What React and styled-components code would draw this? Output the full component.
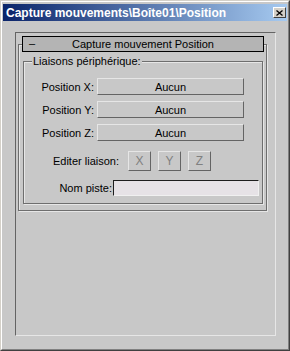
import React from 'react'
import styled, { createGlobalStyle } from 'styled-components'

const Global = createGlobalStyle`
    html, body {
        margin: 0;
        padding: 0;
        background: #c8c8c8;
    }
    body {
        font-family: 'Liberation Sans', Arial, sans-serif;
        font-size: 11px;
        color: #000;
    }
`

const Window = styled.div`
    width: 290px;
    height: 351px;
    box-sizing: border-box;
    border: 1px solid;
    border-color: #d4d0c8 #404040 #404040 #d4d0c8;
    background: #c8c8c8;
`
const Frame = styled.div`
    height: 100%;
    box-sizing: border-box;
    border: 1px solid;
    border-color: #ffffff #808080 #808080 #ffffff;
    padding: 2px 1px 1px 1px;
    display: flex;
    flex-direction: column;
`
const TitleBar = styled.div`
    height: 17px;
    flex: none;
    background: linear-gradient(to right, #0a246a, #a6caf0);
    display: flex;
    align-items: center;
    justify-content: space-between;
    padding: 0 1px 0 3px;
`
const Title = styled.span`
    color: #fff;
    font-weight: bold;
    font-size: 12px;
    white-space: nowrap;
`
const CloseBtn = styled.div`
    width: 13px;
    height: 11px;
    box-sizing: border-box;
    background: #d4d0c8;
    border: 1px solid;
    border-color: #ffffff #404040 #404040 #ffffff;
    display: flex;
    align-items: center;
    justify-content: center;
`
const Panel = styled.div`
    flex: 1;
    margin: 11px 11px 12px 12px;
    border: 1px solid;
    border-color: #646464 #e6e6e6 #e6e6e6 #646464;
    padding: 3px 0 0 2px;
`
const Rollout = styled.div`
    width: 249px;
`
const RollHeader = styled.div`
    position: relative;
    z-index: 1;
    height: 16px;
    box-sizing: border-box;
    margin: 0 3px 0 4px;
    border: 1px solid #000;
    background: #b4b4b4;
    display: flex;
    align-items: center;
    justify-content: center;
    .dash {
        position: absolute;
        left: 6px;
        top: 0px;
    }
`
const RollFrame = styled.div`
    margin-top: -8px;
    border: 1px solid #6e6e6e;
    box-shadow: inset 1px 1px 0 #e6e6e6, 1px 1px 0 #e6e6e6;
    padding: 16px 3px 6px 4px;
`
const Group = styled.div`
    position: relative;
    border: 1px solid #6e6e6e;
    box-shadow: inset 1px 1px 0 #e6e6e6, 1px 1px 0 #e6e6e6;
    padding: 16px 0 7px 0;
    display: flex;
    flex-direction: column;
`
const Caption = styled.span`
    position: absolute;
    top: -7px;
    left: 8px;
    padding: 0 1px;
    background: #c8c8c8;
    line-height: 13px;
`
const Row = styled.div`
    display: flex;
    align-items: center;
    gap: ${p => p.$gap}px;
    margin-top: ${p => p.$top}px;
`
const Label = styled.span`
    width: ${p => p.$w}px;
    text-align: right;
    white-space: nowrap;
`
const Button = styled.div`
    width: 147px;
    height: 17px;
    box-sizing: border-box;
    border: 1px solid;
    border-color: #e6e6e6 #646464 #646464 #e6e6e6;
    display: flex;
    align-items: center;
    justify-content: center;
`
const AxisGroup = styled.div`
    display: flex;
    gap: 7px;
`
const AxisBtn = styled.div`
    width: 23px;
    height: 20px;
    box-sizing: border-box;
    border: 1px solid;
    border-color: #e6e6e6 #646464 #646464 #e6e6e6;
    color: #808080;
    font-size: 12px;
    display: flex;
    align-items: center;
    justify-content: center;
`
const Input = styled.div`
    width: 146px;
    height: 16px;
    box-sizing: border-box;
    border: 1px solid;
    border-color: #1e1e1e #f0f0f0 #f0f0f0 #1e1e1e;
    background: #e6e2e6;
`

const axes = ['X', 'Y', 'Z']

export default function App() {
    return (
        <>
            <Global />
            <Window>
                <Frame>
                    <TitleBar>
                        <Title>Capture mouvements\Boîte01\Position</Title>
                        <CloseBtn>
                            <svg width="7" height="6" viewBox="0 0 7 6">
                                <path d="M0.5 0.5 L6.5 5.5 M6.5 0.5 L0.5 5.5" stroke="#000" strokeWidth="1.3" />
                            </svg>
                        </CloseBtn>
                    </TitleBar>
                    <Panel>
                        <Rollout>
                            <RollHeader>
                                <span className='dash'>–</span>
                                <span>Capture mouvement Position</span>
                            </RollHeader>
                            <RollFrame>
                                <Group>
                                    <Caption>Liaisons périphérique:</Caption>
                                    {axes.map((a, i) => (
                                        <Row key={a} $gap={3} $top={i == 0 ? 0 : 6}>
                                            <Label $w={70}>{'Position ' + a + ':'}</Label>
                                            <Button>Aucun</Button>
                                        </Row>
                                    ))}
                                    <Row $gap={9} $top={10}>
                                        <Label $w={95}>Editer liaison:</Label>
                                        <AxisGroup>
                                            {axes.map(a => <AxisBtn key={a}>{a}</AxisBtn>)}
                                        </AxisGroup>
                                    </Row>
                                    <Row $gap={1} $top={9}>
                                        <Label $w={88}>Nom piste:</Label>
                                        <Input />
                                    </Row>
                                </Group>
                            </RollFrame>
                        </Rollout>
                    </Panel>
                </Frame>
            </Window>
        </>
    )
}
